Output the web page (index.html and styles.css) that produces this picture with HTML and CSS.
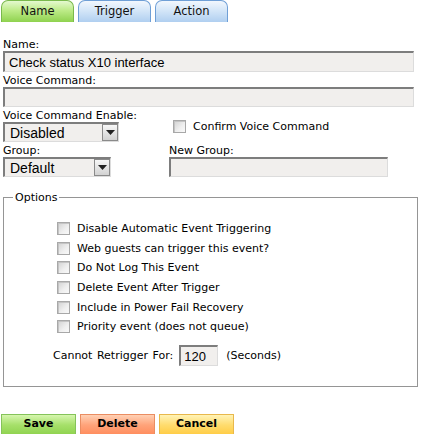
FILE: index.html
```html
<!DOCTYPE html>
<html lang="en">
<head>
    <meta charset="UTF-8">
    <title>Event - Name</title>
    <link rel="stylesheet" href="styles.css">
</head>
<body>
    <div class="tabs">
        <div class="tab tab-active">Name</div>
        <div class="tab">Trigger</div>
        <div class="tab">Action</div>
    </div>

    <form class="event-form">
        <label class="field-label" for="eventName">Name:</label>
        <input class="text-input wide" id="eventName" type="text" value="Check status X10 interface">

        <label class="field-label" for="voiceCommand">Voice Command:</label>
        <input class="text-input wide voice" id="voiceCommand" type="text">

        <div class="field-row">
            <div class="field-col">
                <label class="field-label">Voice Command Enable:</label>
                <div class="select select-enable">
                    <select>
                        <option>Disabled</option>
                        <option>Enabled</option>
                    </select>
                    <span class="select-arrow"><svg width="9" height="5" viewBox="0 0 9 5"><path d="M0 0h9L4.5 5z" fill="#222"/></svg></span>
                </div>
            </div>
            <label class="check confirm"><input type="checkbox"><span>Confirm Voice Command</span></label>
        </div>

        <div class="field-row">
            <div class="field-col">
                <label class="field-label">Group:</label>
                <div class="select select-group">
                    <select>
                        <option>Default</option>
                    </select>
                    <span class="select-arrow"><svg width="9" height="5" viewBox="0 0 9 5"><path d="M0 0h9L4.5 5z" fill="#222"/></svg></span>
                </div>
            </div>
            <div class="field-col-right">
                <label class="field-label" for="newGroup">New Group:</label>
                <input class="text-input group-input" id="newGroup" type="text">
            </div>
        </div>

        <fieldset class="options">
            <legend>Options</legend>
            <div class="option-list">
                <label class="check option"><input type="checkbox"><span>Disable Automatic Event Triggering</span></label>
                <label class="check option"><input type="checkbox"><span>Web guests can trigger this event?</span></label>
                <label class="check option"><input type="checkbox"><span>Do Not Log This Event</span></label>
                <label class="check option"><input type="checkbox"><span>Delete Event After Trigger</span></label>
                <label class="check option"><input type="checkbox"><span>Include in Power Fail Recovery</span></label>
                <label class="check option"><input type="checkbox"><span>Priority event (does not queue)</span></label>
            </div>
            <div class="retrigger">
                <span>Cannot Retrigger For:</span>
                <input class="text-input seconds" type="text" value="120">
                <span>(Seconds)</span>
            </div>
        </fieldset>

        <div class="buttons">
            <button type="button" class="btn btn-save">Save</button>
            <button type="button" class="btn btn-delete">Delete</button>
            <button type="button" class="btn btn-cancel">Cancel</button>
        </div>
    </form>
</body>
</html>
```

FILE: styles.css
```css
* {
    box-sizing: border-box;
}

body {
    margin: 0;
    background: #fff;
    color: #000;
    font-family: "DejaVu Sans", Verdana, sans-serif;
    font-size: 11px;
}

/* tabs */
.tabs {
    display: flex;
    gap: 4px;
    padding-left: 1px;
    height: 22px;
}

.tab {
    width: 73px;
    height: 22px;
    border: 1px solid #6f9fd6;
    border-bottom: none;
    border-radius: 7px 7px 0 0;
    background: linear-gradient(#f2f7fd, #d4e6f8 45%, #b0cff0);
    font-size: 11.5px;
    line-height: 21px;
    text-align: center;
    color: #111;
}

.tab-active {
    border-color: #79b94c;
    background: linear-gradient(#e4f9cf, #bdeb88 45%, #8fd24f);
}

/* form */
.event-form {
    padding: 14px 3px 0;
}

.field-label {
    display: block;
    padding-top: 2px;
    line-height: 13px;
}

.text-input {
    display: block;
    height: 21px;
    margin: 0;
    padding: 1px 4px 0;
    background: #f1efed;
    border-style: solid;
    border-width: 2px 1px 1px 2px;
    border-color: #7d7d7d #dcdcdc #dcdcdc #7d7d7d;
    font-family: "Liberation Sans", Arial, sans-serif;
    font-size: 13px;
    color: #000;
    outline: none;
}

.wide {
    width: 411px;
}

.voice {
    height: 20px;
}

.field-row {
    display: flex;
}

.field-col {
    width: 166px;
}

.select {
    display: flex;
    align-items: center;
    height: 20px;
    background: #f1efed;
    border-style: solid;
    border-width: 2px 1px 1px 2px;
    border-color: #7d7d7d #dcdcdc #dcdcdc #7d7d7d;
}

.select-enable {
    width: 116px;
}

.select-group {
    width: 108px;
}

.select select {
    flex: 1;
    min-width: 0;
    height: 100%;
    padding: 0 0 0 5px;
    border: none;
    background: transparent;
    font-family: "Liberation Sans", Arial, sans-serif;
    font-size: 14px;
    -webkit-appearance: none;
    appearance: none;
    outline: none;
}

.select-arrow {
    display: flex;
    align-items: center;
    justify-content: center;
    width: 16px;
    height: 17px;
    border: 1px solid #8a8a8a;
    background: linear-gradient(#f7f7f7, #d2d2d2);
}

/* checkboxes */
.check {
    display: flex;
    align-items: center;
    line-height: 13px;
}

.check input {
    -webkit-appearance: none;
    appearance: none;
    width: 13px;
    height: 13px;
    margin: 0 7px 0 0;
    border: 1px solid #a8a8a8;
    background: linear-gradient(135deg, #d2d2d2, #efefef 60%, #f9f9f9);
    box-shadow: inset 1px 1px 0 #c4c4c4;
}

.confirm {
    align-self: flex-start;
    margin: 13px 0 0 4px;
}

.group-input {
    width: 219px;
    height: 20px;
}

/* options */
.options {
    margin: 14px 0 0;
    padding: 15px 0 20px 9px;
    border: 1px solid #959595;
}

.options legend {
    padding: 0 2px;
    line-height: 13px;
}

.option-list {
    padding-left: 44px;
}

.option {
    height: 19.6px;
}

.retrigger {
    display: flex;
    align-items: center;
    margin-top: 8px;
    padding-left: 40px;
    word-spacing: 1px;
}

.seconds {
    width: 39px;
    margin: 0 8px 0 6px;
    padding-left: 3px;
}

/* buttons */
.buttons {
    display: flex;
    gap: 4px;
    margin-top: 27px;
    margin-left: -2px;
}

.btn {
    width: 75px;
    height: 22px;
    padding: 0 0 3px;
    border: 1px solid;
    font-family: "DejaVu Sans", Verdana, sans-serif;
    font-size: 11px;
    font-weight: bold;
    line-height: 17px;
    color: #000;
    cursor: pointer;
}

.btn-save {
    border-color: #85c35a;
    background: linear-gradient(#d6f6ae, #a6e06a 50%, #8ed24e);
}

.btn-delete {
    border-color: #ea8d62;
    background: linear-gradient(#ffd0b4, #ffa37a 50%, #ff8c5c);
}

.btn-cancel {
    border-color: #e8b84c;
    background: linear-gradient(#fff3b6, #ffdc6e 50%, #ffcb42);
}
```
